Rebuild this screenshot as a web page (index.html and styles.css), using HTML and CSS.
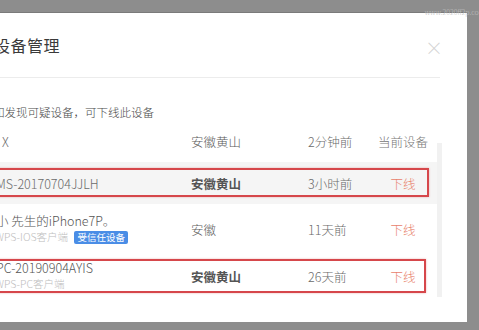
FILE: index.html
```html
<!DOCTYPE html>
<html lang="zh-CN">
<head>
    <meta charset="UTF-8">
    <meta name="viewport" content="width=device-width, initial-scale=1.0">
    <title>设备管理</title>
    <link rel="stylesheet" href="styles.css">
</head>
<body>

<div class="topbar">www.2020ff2p.com</div>

<div class="dialog">
    <div class="head">
        <h2>设备管理</h2>
        <span class="close">&times;</span>
    </div>
    <p class="tip">如发现可疑设备，可下线此设备</p>

    <div class="list">
        <div class="devices">
            <div class="row">
                <div class="name first">X</div>
                <div class="place">安徽黄山</div>
                <div class="time">2分钟前</div>
                <div class="action current">当前设备</div>
            </div>
            <div class="row grey marked">
                <div class="name">MS-20170704JJLH</div>
                <div class="place strong">安徽黄山</div>
                <div class="time">3小时前</div>
                <div class="action">下线</div>
            </div>
            <div class="row tall">
                <div class="name">
                    <div class="main">小 先生的iPhone7P。</div>
                    <div class="sub">WPS-IOS客户端 <span class="badge">受信任设备</span></div>
                </div>
                <div class="place">安徽</div>
                <div class="time">11天前</div>
                <div class="action">下线</div>
            </div>
            <div class="row two marked low">
                <div class="name">
                    <div class="main">PC-20190904AYIS</div>
                    <div class="sub">WPS-PC客户端</div>
                </div>
                <div class="place strong">安徽黄山</div>
                <div class="time">26天前</div>
                <div class="action">下线</div>
            </div>
        </div>
        <div class="track"></div>
    </div>
</div>

</body>
</html>
```

FILE: styles.css
```css
body {
    margin: 0;
    background-color: #8d8d8d;
    font-family: "Noto Sans CJK SC", "Liberation Sans", sans-serif;
    font-weight: 300;
    overflow: hidden;
}
.topbar {
    height: 12px;
    line-height: 24px;
    font-size: 7px;
    color: #c4c4c4;
    text-align: right;
    margin-right: -6px;
    white-space: nowrap;
}
.dialog {
    margin-left: -60px;
    width: 527px;
    height: 310px;
    padding-left: 53px;
    box-sizing: border-box;
    background-color: #ffffff;
    border-top: 1px solid #7a7a7a;
}
.head {
    display: flex;
    justify-content: space-between;
    align-items: center;
    width: 447px;
    height: 64px;
    border-bottom: 1px solid #ececec;
}
.head h2 {
    margin: 0 0 0 1px;
    font-size: 16px;
    font-weight: normal;
    color: #3a3a3a;
    letter-spacing: 0.5px;
}
.close {
    font-size: 18px;
    color: #d3d3d3;
    margin-right: -3px;
    margin-top: 4px;
}
.tip {
    margin: 26px 0 0 0;
    line-height: 16px;
    font-size: 11.5px;
    color: #4a4a4a;
}
.list {
    display: flex;
    margin-top: 1px;
}
.devices {
    width: 444px;
}
.track {
    width: 5px;
    height: 154px;
    margin-top: 22px;
    background-color: #f1f1f1;
}
.row {
    position: relative;
    display: grid;
    grid-template-columns: 198px 115px 72px 50px;
    align-items: center;
    height: 41px;
    font-size: 12.5px;
    color: #6a6a6a;
}
.row.grey {
    height: 42px;
    background-color: #f5f5f5;
}
.row.tall {
    height: 50px;
}
.row.two {
    height: 44px;
}
.row.marked::after {
    content: "";
    position: absolute;
    left: -12px;
    right: 8px;
    top: 6px;
    bottom: 7px;
    border: 2px solid #d6474b;
    box-shadow: 0 0 2px rgba(214, 71, 75, 0.4);
}
.row.low::after {
    top: 5px;
    bottom: 5px;
    right: 11px;
}
.name {
    padding-left: 3px;
}
.name.first {
    padding-left: 9px;
}
.name .main {
    line-height: 16px;
    color: #555;
}
.name .sub {
    line-height: 16px;
    font-size: 10.5px;
    color: #bdbdbd;
    margin-left: -1px;
}
.place {
    color: #5a5a5a;
}
.place.strong {
    font-weight: bold;
    color: #555;
}
.time {
    padding-left: 2px;
}
.action {
    text-align: center;
    color: #e8826c;
}
.action.current {
    color: #777;
}
.badge {
    display: inline-block;
    margin-left: 4px;
    padding: 0 3px;
    line-height: 13px;
    font-size: 9.5px;
    font-weight: normal;
    color: #ffffff;
    background-color: #4a8de6;
    border-radius: 2px;
}
```
